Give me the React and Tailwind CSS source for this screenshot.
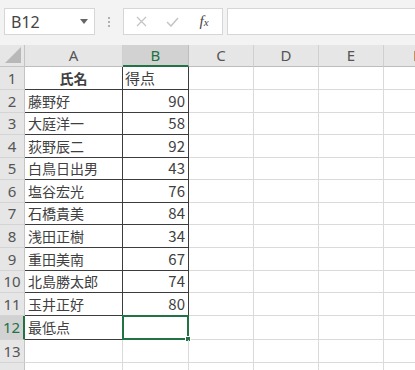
import React from "react";

const JP = { fontFamily: '"Noto Sans CJK JP", "Noto Sans", sans-serif' };

const data = [
  ["氏名", "得点"],
  ["藤野好", "90"],
  ["大庭洋一", "58"],
  ["荻野辰二", "92"],
  ["白鳥日出男", "43"],
  ["塩谷宏光", "76"],
  ["石橋貴美", "84"],
  ["浅田正樹", "34"],
  ["重田美南", "67"],
  ["北島勝太郎", "74"],
  ["玉井正好", "80"],
  ["最低点", ""],
  ["", ""],
  ["", ""],
];

const heights = [
  "h-[23px]", "h-[23px]", "h-[22px]", "h-[23px]", "h-[22px]", "h-[23px]", "h-[22px]",
  "h-[23px]", "h-[23px]", "h-[22px]", "h-[23px]", "h-[24px]", "h-[23px]", "h-[23px]",
];

function Row({ i }) {
  const n = i + 1;
  const [a, b] = data[i];
  const inBox = n <= 12;
  const sel = n === 12;
  return (
    <div className={`flex ${heights[i]} shrink-0`}>
      <div
        className={`w-[25px] shrink-0 flex items-center justify-center text-[15px] border-b border-[#d4d4d4] ${
          sel
            ? "bg-[#d2d2d2] text-[#217346] border-r-2 border-r-[#217346]"
            : "bg-[#e6e6e6] text-[#555] border-r border-r-[#c4c4c4]"
        }`}
        style={{ fontFamily: '"Noto Sans", sans-serif' }}
      >
        {n}
      </div>
      <div
        className={`w-[98px] shrink-0 flex items-center text-[14px] text-[#404040] border-r border-b ${
          inBox ? "border-[#3c3c3c]" : "border-[#dadada]"
        } ${n === 1 ? "justify-center font-bold text-[#333]" : "pl-[3px]"}`}
      >
        {a}
      </div>
      <div
        className={`relative w-[66px] shrink-0 flex items-center text-[15px] text-[#404040] border-r border-b ${
          inBox && !sel ? "border-[#3c3c3c]" : "border-[#dadada]"
        } ${n === 1 ? "justify-start pl-[2px] text-[14px]" : "justify-end pr-[3px]"}`}
      >
        {b}
        {sel && (
          <div className="absolute -left-[1px] -top-[1px] -right-[1px] -bottom-[1px] border-2 border-[#217346]">
            <div className="absolute -right-[4px] -bottom-[4px] w-[6px] h-[6px] bg-[#217346] border border-white"></div>
          </div>
        )}
      </div>
      <div className="w-[65px] shrink-0 border-r border-b border-[#dadada]"></div>
      <div className="w-[65px] shrink-0 border-r border-b border-[#dadada]"></div>
      <div className="w-[65px] shrink-0 border-r border-b border-[#dadada]"></div>
      <div className="flex-1 border-b border-[#dadada]"></div>
    </div>
  );
}

export default function App() {
  return (
    <div className="w-[415px] h-[370px] overflow-hidden bg-white flex flex-col" style={JP}>
      {/* formula bar */}
      <div className="h-[45px] shrink-0 bg-[#f3f3f3] flex items-start pt-[8px]">
        <div className="ml-[4px] w-[91px] h-[27px] bg-white border border-[#d6d6d6] flex items-center justify-between pl-[6px] pr-[6px]">
          <span className="text-[16px] text-[#444]" style={{ fontFamily: '"Noto Sans", sans-serif' }}>B12</span>
          <svg width="8" height="5" viewBox="0 0 8 5"><path d="M0 0 L8 0 L4 5 Z" fill="#666" /></svg>
        </div>
        <div className="w-[28px] h-[27px] flex flex-col items-center justify-center gap-[2px]">
          <div className="w-[2px] h-[2px] bg-[#b0b0b0]"></div>
          <div className="w-[2px] h-[2px] bg-[#b0b0b0]"></div>
          <div className="w-[2px] h-[2px] bg-[#b0b0b0]"></div>
        </div>
        <div className="w-[100px] h-[27px] bg-white border border-[#d6d6d6] flex items-center">
          <div className="w-[34px] flex justify-center">
            <svg width="11" height="11" viewBox="0 0 11 11">
              <path d="M1 1 L10 10 M10 1 L1 10" stroke="#c4c4c4" strokeWidth="1.3" />
            </svg>
          </div>
          <div className="w-[28px] flex justify-center">
            <svg width="13" height="10" viewBox="0 0 13 10">
              <path d="M1 5 L5 9 L12 1" stroke="#c4c4c4" strokeWidth="1.5" fill="none" />
            </svg>
          </div>
          <div className="flex-1 flex justify-center">
            <span className="text-[15px] italic text-[#444]" style={{ fontFamily: '"Liberation Serif", serif' }}>
              f<span className="text-[11px]">x</span>
            </span>
          </div>
        </div>
        <div className="ml-[4px] flex-1 h-[27px] bg-white border border-[#d6d6d6] border-r-0"></div>
      </div>
      {/* column headers */}
      <div className="flex h-[22px] shrink-0 bg-[#e6e6e6] text-[15px] text-[#555]" style={{ fontFamily: '"Noto Sans", sans-serif' }}>
        <div className="w-[25px] shrink-0 relative border-r border-b border-[#c4c4c4]">
          <svg className="absolute right-[3px] bottom-[3px]" width="16" height="16" viewBox="0 0 16 16">
            <path d="M16 0 L16 16 L0 16 Z" fill="#b8b8b8" />
          </svg>
        </div>
        <div className="w-[98px] shrink-0 flex items-center justify-center border-r border-b border-r-[#d0d0d0] border-b-[#bdbdbd]">A</div>
        <div className="w-[66px] shrink-0 flex items-center justify-center bg-[#d2d2d2] text-[#217346] border-r border-r-[#bdbdbd] border-b-2 border-b-[#217346]">B</div>
        <div className="w-[65px] shrink-0 flex items-center justify-center border-r border-b border-r-[#d0d0d0] border-b-[#bdbdbd]">C</div>
        <div className="w-[65px] shrink-0 flex items-center justify-center border-r border-b border-r-[#d0d0d0] border-b-[#bdbdbd]">D</div>
        <div className="w-[65px] shrink-0 flex items-center justify-center border-r border-b border-r-[#d0d0d0] border-b-[#bdbdbd]">E</div>
        <div className="flex-1 flex items-center pl-[29px] border-b border-[#bdbdbd]">F</div>
      </div>
      {data.map((_, i) => (
        <Row key={i} i={i} />
      ))}
    </div>
  );
}
